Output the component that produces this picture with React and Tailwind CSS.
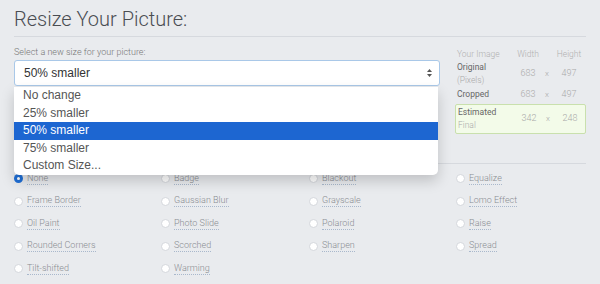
import React from "react"

const options = ["No change", "25% smaller", "50% smaller", "75% smaller", "Custom Size..."]

const effects = [
  ["None", "Badge", "Blackout", "Equalize"],
  ["Frame Border", "Gaussian Blur", "Grayscale", "Lomo Effect"],
  ["Oil Paint", "Photo Slide", "Polaroid", "Raise"],
  ["Rounded Corners", "Scorched", "Sharpen", "Spread"],
  ["Tilt-shifted", "Warming"],
]

function SizeRow({ label, sub, w, h }) {
  return (
    <div className="grid grid-cols-[59px_28px_10px_34px] items-center">
      <div className="pl-[2px] text-[8.5px] leading-[13px]">
        <div className="text-[#666]">{label}</div>
        {sub && <div className="font-light text-[#aaa]">{sub}</div>}
      </div>
      <div className="text-center text-[9px] font-light text-[#aaa]">{w}</div>
      <div className="text-center text-[8px] font-light text-[#aaa]">x</div>
      <div className="text-center text-[9px] font-light text-[#aaa]">{h}</div>
    </div>
  )
}

function Radio({ label, checked }) {
  return (
    <div className="flex items-center gap-[4px] h-[22.5px]">
      {checked ? (
        <span className="w-[9px] h-[9px] rounded-full bg-[#1f6fd6] flex items-center justify-center">
          <span className="w-[3px] h-[3px] rounded-full bg-white" />
        </span>
      ) : (
        <span className="w-[9px] h-[9px] rounded-full bg-white border border-[#d4d7dc]" />
      )}
      <span className="text-[9px] leading-[11px] font-light text-[#8a8d92] border-b border-dotted border-[#a9b8cc]">{label}</span>
    </div>
  )
}

export default function App() {
  return (
    <div className="w-[600px] h-[284px] overflow-hidden bg-[#e9ebee] px-[14px]" style={{ fontFamily: "Roboto, 'Liberation Sans', sans-serif" }}>
      <h1 className="pt-[7px] text-[20px] leading-[24px] font-light text-[#4a4d52]">Resize Your Picture:</h1>
      <div className="mt-[5px] border-t border-[#d6d9de]" />

      <div className="flex justify-between">
        <div className="w-[426px] relative">
          <div className="mt-[10px] text-[9px] leading-[10px] font-light text-[#777]">Select a new size for your picture:</div>
          <div className="mt-[3px] h-[26px] bg-white border border-[#a9c8e8] rounded-[3px] flex items-center justify-between pl-[9px] pr-[7px]" style={{ fontFamily: "'Liberation Sans', Arial, sans-serif" }}>
            <span className="text-[12px] text-[#333]">50% smaller</span>
            <svg width="5" height="8" viewBox="0 0 5 8">
              <path d="M2.5 0 L5 3 L0 3 Z" fill="#555" />
              <path d="M0 5 L5 5 L2.5 8 Z" fill="#555" />
            </svg>
          </div>
          <div className="absolute left-0 top-[50px] w-[424px] bg-white rounded-b-[5px] shadow-[0_6px_14px_rgba(0,0,0,0.18)] z-10" style={{ fontFamily: "'Liberation Sans', Arial, sans-serif" }}>
            {options.map((o, i) => (
              <div key={o} className={"h-[17.5px] leading-[17.5px] pl-[9px] text-[12px] " + (i === 2 ? "bg-[#1d66d1] text-white" : "text-[#555]")}>{o}</div>
            ))}
          </div>
        </div>

        <div className="w-[131px] mt-[11px]">
          <div className="grid grid-cols-[59px_28px_10px_34px] text-[8.5px] leading-[12px] text-[#b0b0b0] font-light">
            <div className="pl-[2px]">Your Image</div>
            <div className="text-center">Width</div>
            <div />
            <div className="text-center">Height</div>
          </div>
          <div className="mt-[1px]">
            <SizeRow label="Original" sub="(Pixels)" w="683" h="497" />
          </div>
          <div className="mt-[1px]">
            <SizeRow label="Cropped" w="683" h="497" />
          </div>
          <div className="mt-[2px] bg-[#f3fbe9] border border-[#c9e0ad] rounded-[2px] py-[1px]">
            <SizeRow label="Estimated" sub="Final" w="342" h="248" />
          </div>
        </div>
      </div>

      <div className="mt-[29px] border-t border-[#d6d9de]" />

      <div className="mt-[4px]">
        {effects.map((row, r) => (
          <div key={r} className="grid grid-cols-[147px_148px_147px_1fr]">
            {row.map((e) => (
              <Radio key={e} label={e} checked={e === "None"} />
            ))}
          </div>
        ))}
      </div>
    </div>
  )
}
